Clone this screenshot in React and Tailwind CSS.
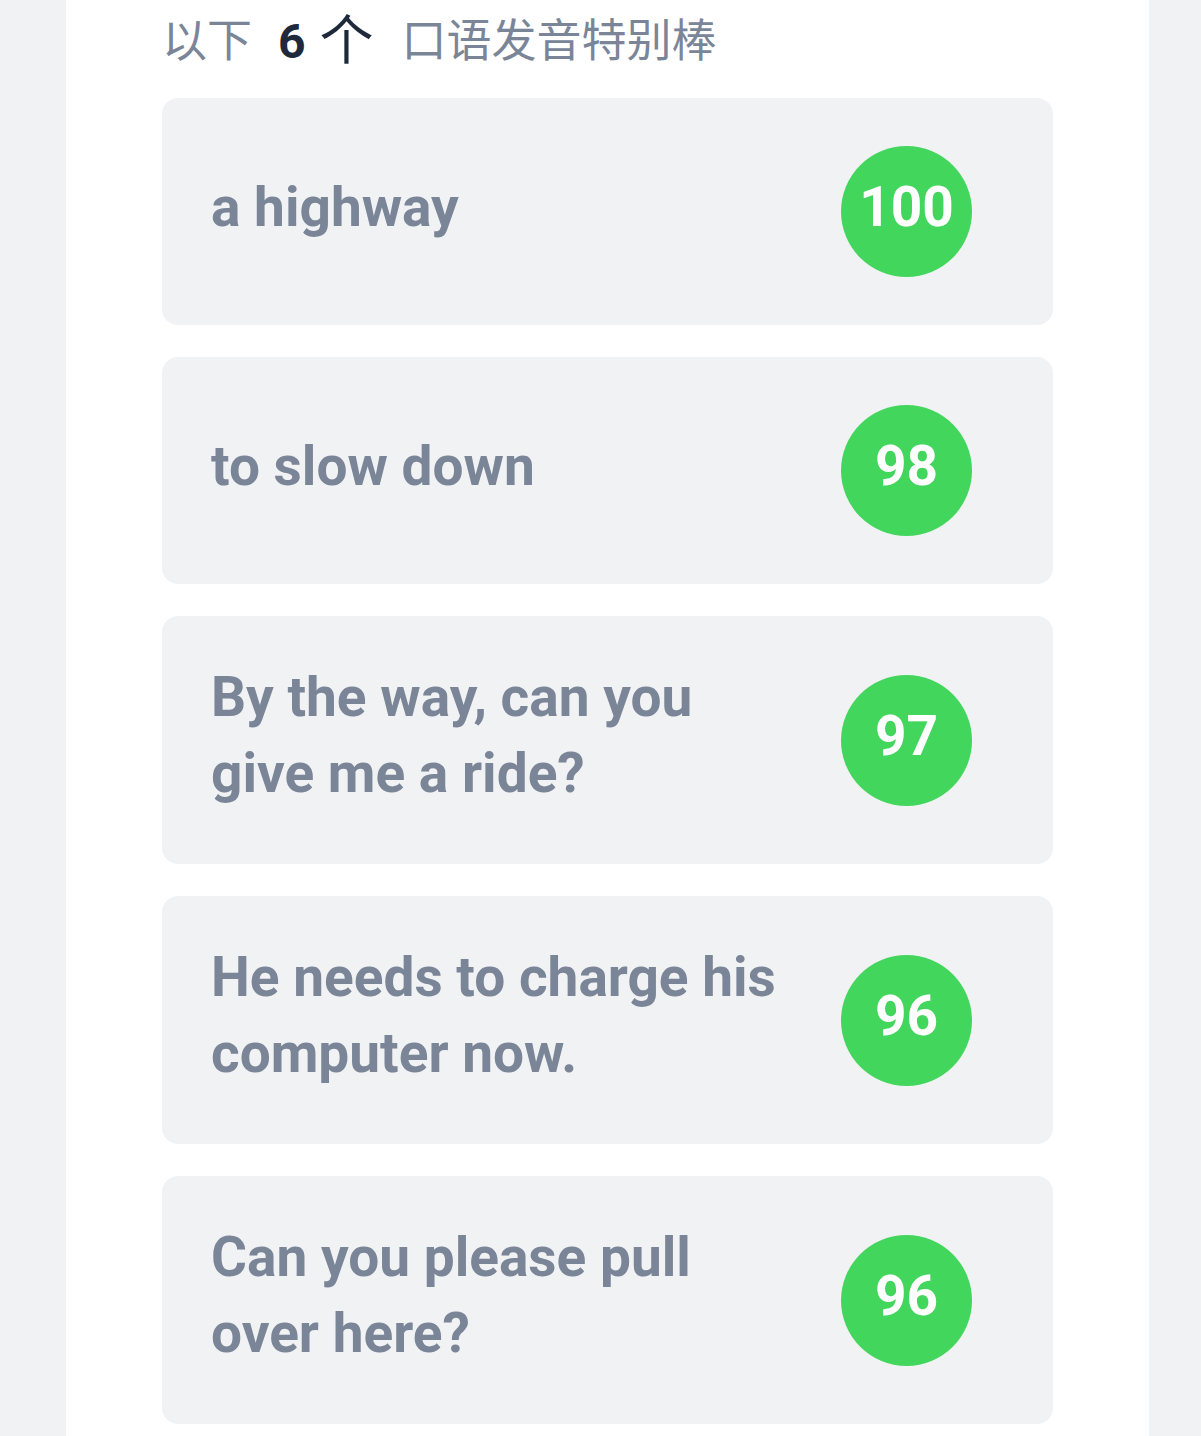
const items = [
  { text: "a highway", score: 100 },
  { text: "to slow down", score: 98 },
  { text: "By the way, can you give me a ride?", score: 97 },
  { text: "He needs to charge his computer now.", score: 96 },
  { text: "Can you please pull over here?", score: 96 },
];

function ScoreCard({ text, score }) {
  return (
    <div className="flex items-center rounded-2xl bg-[#f1f2f4] py-[48px] pl-[49px] pr-[81px]">
      <p className="-mt-[5px] mb-[5px] mr-[48px] flex-1 text-[55px] font-bold leading-[76px] text-[#7b8598]">{text}</p>
      <div className="flex h-[131px] w-[131px] shrink-0 items-center justify-center rounded-full bg-[#43d65d] pb-[8px] text-[55px] font-bold text-white">
        {score}
      </div>
    </div>
  );
}

export default function App() {
  return (
    <div
      className="min-h-screen bg-[#f1f2f4]"
      style={{ fontFamily: 'Roboto, "Noto Sans CJK SC", sans-serif' }}
    >
      <div className="mx-[66px] min-h-screen w-[1083px] bg-white px-[96px] pb-[8px] pt-[12px]">
        <h2 className="mb-[26px] flex h-[60px] items-center text-[45px] font-normal text-[#7b8598]">
          <span>以下</span>
          <span className="ml-[26px] text-[48px] font-bold text-[#1e293b]">6</span>
          <span className="ml-[14px] text-[54px] leading-none text-[#1e293b]">个</span>
          <span className="ml-[28px]">口语发音特别棒</span>
        </h2>
        <div className="flex flex-col gap-[32px]">
          {items.map((it, i) => (
            <ScoreCard key={i} {...it} />
          ))}
        </div>
      </div>
    </div>
  );
}
